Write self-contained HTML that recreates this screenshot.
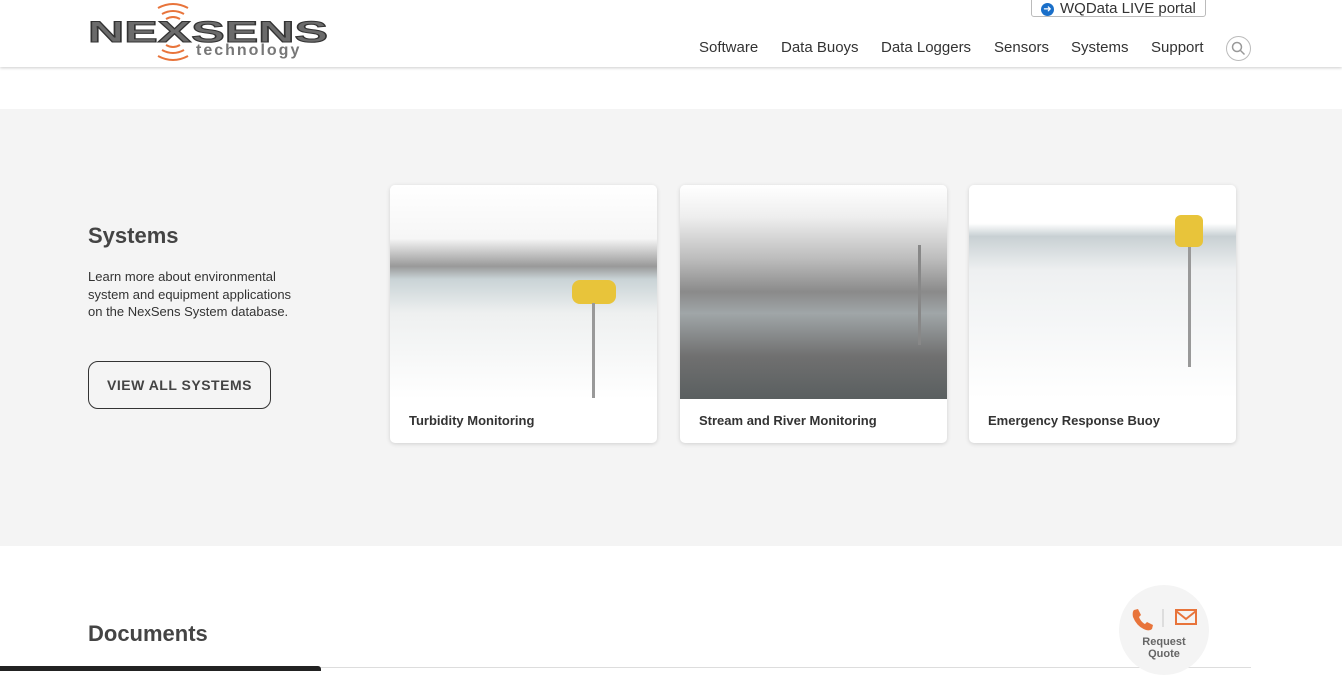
<!DOCTYPE html>
<html><head><meta charset="utf-8"><style>
*{margin:0;padding:0;box-sizing:border-box}
body{width:1342px;height:671px;overflow:hidden;background:#fff;font-family:"Liberation Sans",Arial,sans-serif;color:#333;position:relative}
.hdr{position:absolute;left:0;top:0;width:1342px;height:67px;background:#fff;box-shadow:0 1px 3px rgba(0,0,0,.2);z-index:2}
.nav{position:absolute;top:39px;font-size:15px;color:#333}
.sec{position:absolute;left:0;top:109px;width:1342px;height:437px;background:#f4f4f4}
.card{position:absolute;top:185px;width:267px;height:258px;background:#fff;border-radius:5px;box-shadow:0 1px 4px rgba(0,0,0,.15);overflow:hidden}
.card .img{height:214px}
.card .t{position:absolute;left:19px;top:228px;font-size:13px;font-weight:bold;color:#333}
</style></head><body>
<div class="hdr">
<svg style="position:absolute;left:86px;top:0" width="246" height="64">
<g fill="none" stroke="#e8743b" stroke-width="2">
<path d="M72 8 q15 -8 30 0"/><path d="M76 14 q11 -6 22 0"/><path d="M80 19 q7 -4 14 0"/>
<path d="M80 45 q7 4 14 0"/><path d="M76 50 q11 6 22 0"/><path d="M72 56 q15 8 30 0"/></g>
<text x="2" y="42" font-family="Liberation Sans" font-weight="bold" font-size="30" fill="#6b6b6b" stroke="#333" stroke-width="1" textLength="240" lengthAdjust="spacingAndGlyphs">NEXSENS</text>
<text x="110" y="55" font-family="Liberation Sans" font-weight="bold" font-size="16" fill="#777" letter-spacing="2">technology</text>
</svg>
<div style="position:absolute;left:1031px;top:-4px;width:175px;height:21px;border:1px solid #bbb;border-radius:3px;font-size:15px;color:#333;padding:3px 0 0 9px"><span style="display:inline-block;width:13px;height:13px;border-radius:50%;background:#1a6fc9;color:#fff;font-size:10px;text-align:center;line-height:13px;vertical-align:1px;margin-right:6px">➜</span>WQData LIVE portal</div>
<span class="nav" style="left:699px">Software</span>
<span class="nav" style="left:781px">Data Buoys</span>
<span class="nav" style="left:881px">Data Loggers</span>
<span class="nav" style="left:994px">Sensors</span>
<span class="nav" style="left:1071px">Systems</span>
<span class="nav" style="left:1151px">Support</span>
<div style="position:absolute;left:1226px;top:36px;width:25px;height:25px;border:1px solid #bbb;border-radius:50%"><svg width="23" height="23"><circle cx="10" cy="10" r="4.5" fill="none" stroke="#999" stroke-width="1.5"/><path d="M13.5 13.5l4 4" stroke="#999" stroke-width="1.5"/></svg></div>
</div>
<div class="sec"></div>
<div style="position:absolute;left:88px;top:223px;font-size:22px;font-weight:bold;color:#444">Systems</div>
<div style="position:absolute;left:88px;top:268px;width:216px;font-size:13px;line-height:17.5px;color:#333">Learn more about environmental system and equipment applications on the NexSens System database.</div>
<div style="position:absolute;left:88px;top:361px;width:183px;height:48px;border:1px solid #333;border-radius:10px;font-size:14px;font-weight:bold;letter-spacing:.5px;color:#444;text-align:center;line-height:46px">VIEW ALL SYSTEMS</div>
<div class="card" style="left:390px"><div class="img" style="background:linear-gradient(#fff 0,#f6f6f6 25%,#999 38%,#c9d3d6 44%,#eef0f0 60%,#fff 100%)"></div>
<div style="position:absolute;left:182px;top:95px;width:44px;height:24px;background:#e8c43a;border-radius:8px"></div><div style="position:absolute;left:202px;top:118px;width:3px;height:95px;background:#999"></div><div class="t">Turbidity Monitoring</div></div>
<div class="card" style="left:680px"><div class="img" style="background:linear-gradient(#fff 0,#eee 15%,#bbb 35%,#8a8a8a 50%,#a0a6a8 60%,#707070 80%,#5a5f60 100%)"></div><div style="position:absolute;left:238px;top:60px;width:3px;height:100px;background:#888"></div><div class="t">Stream and River Monitoring</div></div>
<div class="card" style="left:969px"><div class="img" style="background:linear-gradient(#fff 0,#fff 18%,#c8d0d3 24%,#eef0f1 40%,#fff 100%)"></div><div style="position:absolute;left:206px;top:30px;width:28px;height:32px;background:#e8c43a;border-radius:6px"></div><div style="position:absolute;left:219px;top:62px;width:3px;height:120px;background:#999"></div><div class="t">Emergency Response Buoy</div></div>
<div style="position:absolute;left:88px;top:621px;font-size:22px;font-weight:bold;color:#444">Documents</div>
<div style="position:absolute;left:88px;top:667px;width:1163px;height:1px;background:#ddd"></div>
<div style="position:absolute;left:0;top:666px;width:321px;height:5px;background:#222;border-radius:0 3px 0 0"></div>
<div style="position:absolute;left:1119px;top:585px;width:90px;height:90px;border-radius:50%;background:#f4f4f4;text-align:center">
<svg style="position:absolute;left:11px;top:22px" width="70" height="24"><path d="M4 3 l4 -1 l3 6 l-2 2 q2 5 6 7 l2 -2 l6 3 l-1 4 q-2 2 -6 1 q-9 -3 -13 -13 q-1 -5 1 -7z" fill="#e8743b"/><line x1="33" y1="2" x2="33" y2="20" stroke="#ddd" stroke-width="2"/><rect x="46" y="3" width="20" height="14" fill="none" stroke="#e8743b" stroke-width="2"/><path d="M46 4 l10 8 l10 -8" fill="none" stroke="#e8743b" stroke-width="2"/></svg>
<div style="position:absolute;left:0;top:51px;width:90px;font-size:11px;font-weight:bold;color:#666;line-height:12px">Request<br>Quote</div></div>
</body></html>
